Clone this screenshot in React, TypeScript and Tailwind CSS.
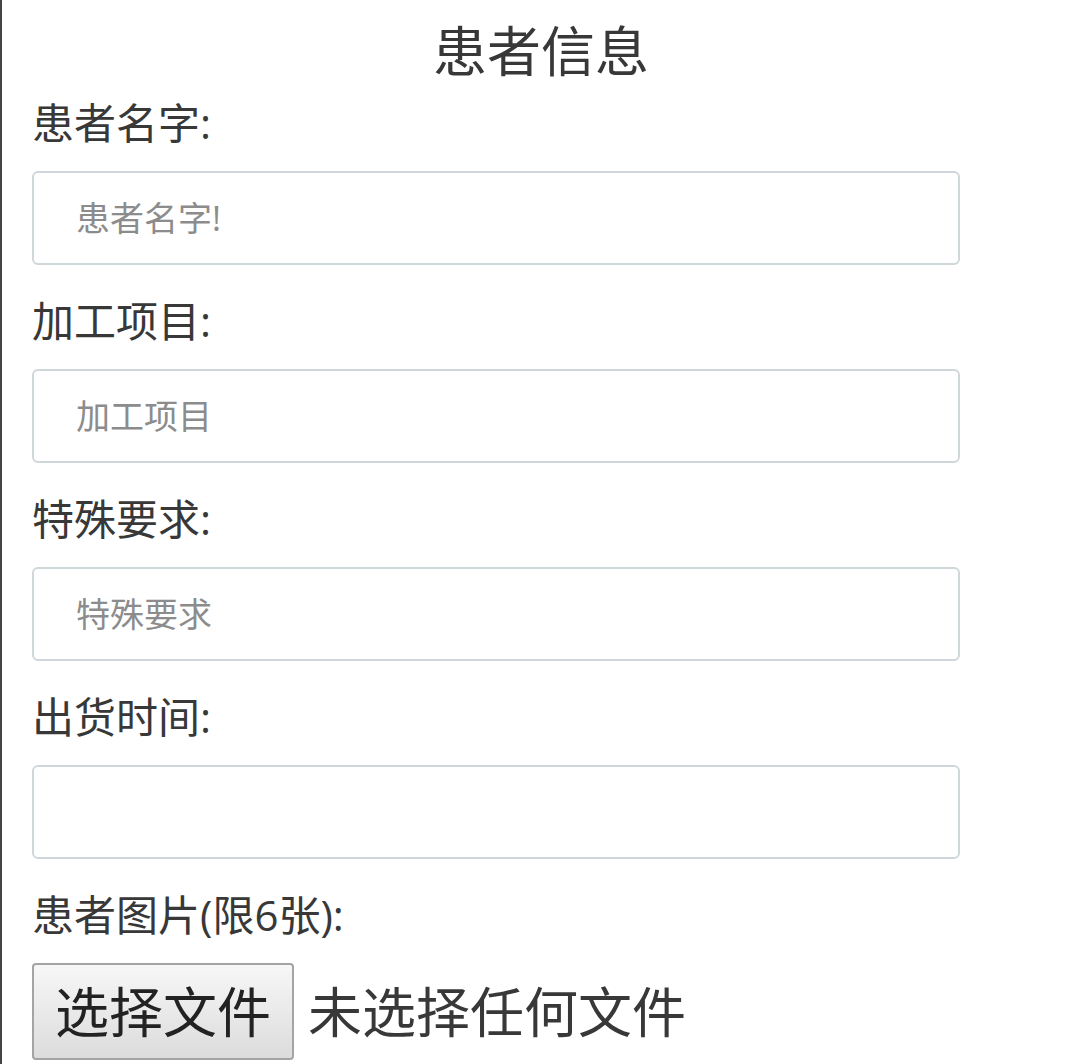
const font = {
  fontFamily: '"Open Sans", "Noto Sans CJK SC", sans-serif',
};

interface FieldProps {
  label: string;
  placeholder?: string;
}

const Field = ({ label, placeholder }: FieldProps) => (
  <div className="flex flex-col pb-[31px]">
    <label className="text-[42px] leading-[50px] text-[#383838] mb-[23px]">
      {label}
    </label>
    <input
      type="text"
      placeholder={placeholder}
      className="w-[928px] h-[94px] border-2 border-[#d0d7db] rounded-[6px] bg-white px-[42px] text-[34px] text-[#333] placeholder:text-[#8c8c8c] outline-none"
      style={font}
    />
  </div>
);

export default function App() {
  return (
    <div
      className="min-h-[1064px] w-[1080px] bg-white border-l-2 border-[#444] pl-[30px] overflow-hidden"
      style={font}
    >
      <h3 className="pt-[4px] text-[54px] leading-[94px] text-[#383838] text-center pr-[30px]">
        患者信息
      </h3>
      <Field label="患者名字:" placeholder="患者名字!" />
      <Field label="加工项目:" placeholder="加工项目" />
      <Field label="特殊要求:" placeholder="特殊要求" />
      <Field label="出货时间:" />
      <div className="flex flex-col">
        <label className="text-[42px] leading-[50px] text-[#383838] mb-[23px]">
          患者图片(限6张):
        </label>
        <div className="flex items-center">
          <button className="h-[97px] w-[262px] border-2 border-[#a4a4a4] rounded-[4px] bg-gradient-to-b from-[#f7f7f7] to-[#dcdcdc] text-[54px] leading-none text-[#222] flex items-center justify-center">
            选择文件
          </button>
          <span className="ml-[14px] text-[54px] leading-none text-[#383838]">
            未选择任何文件
          </span>
        </div>
      </div>
    </div>
  );
}
